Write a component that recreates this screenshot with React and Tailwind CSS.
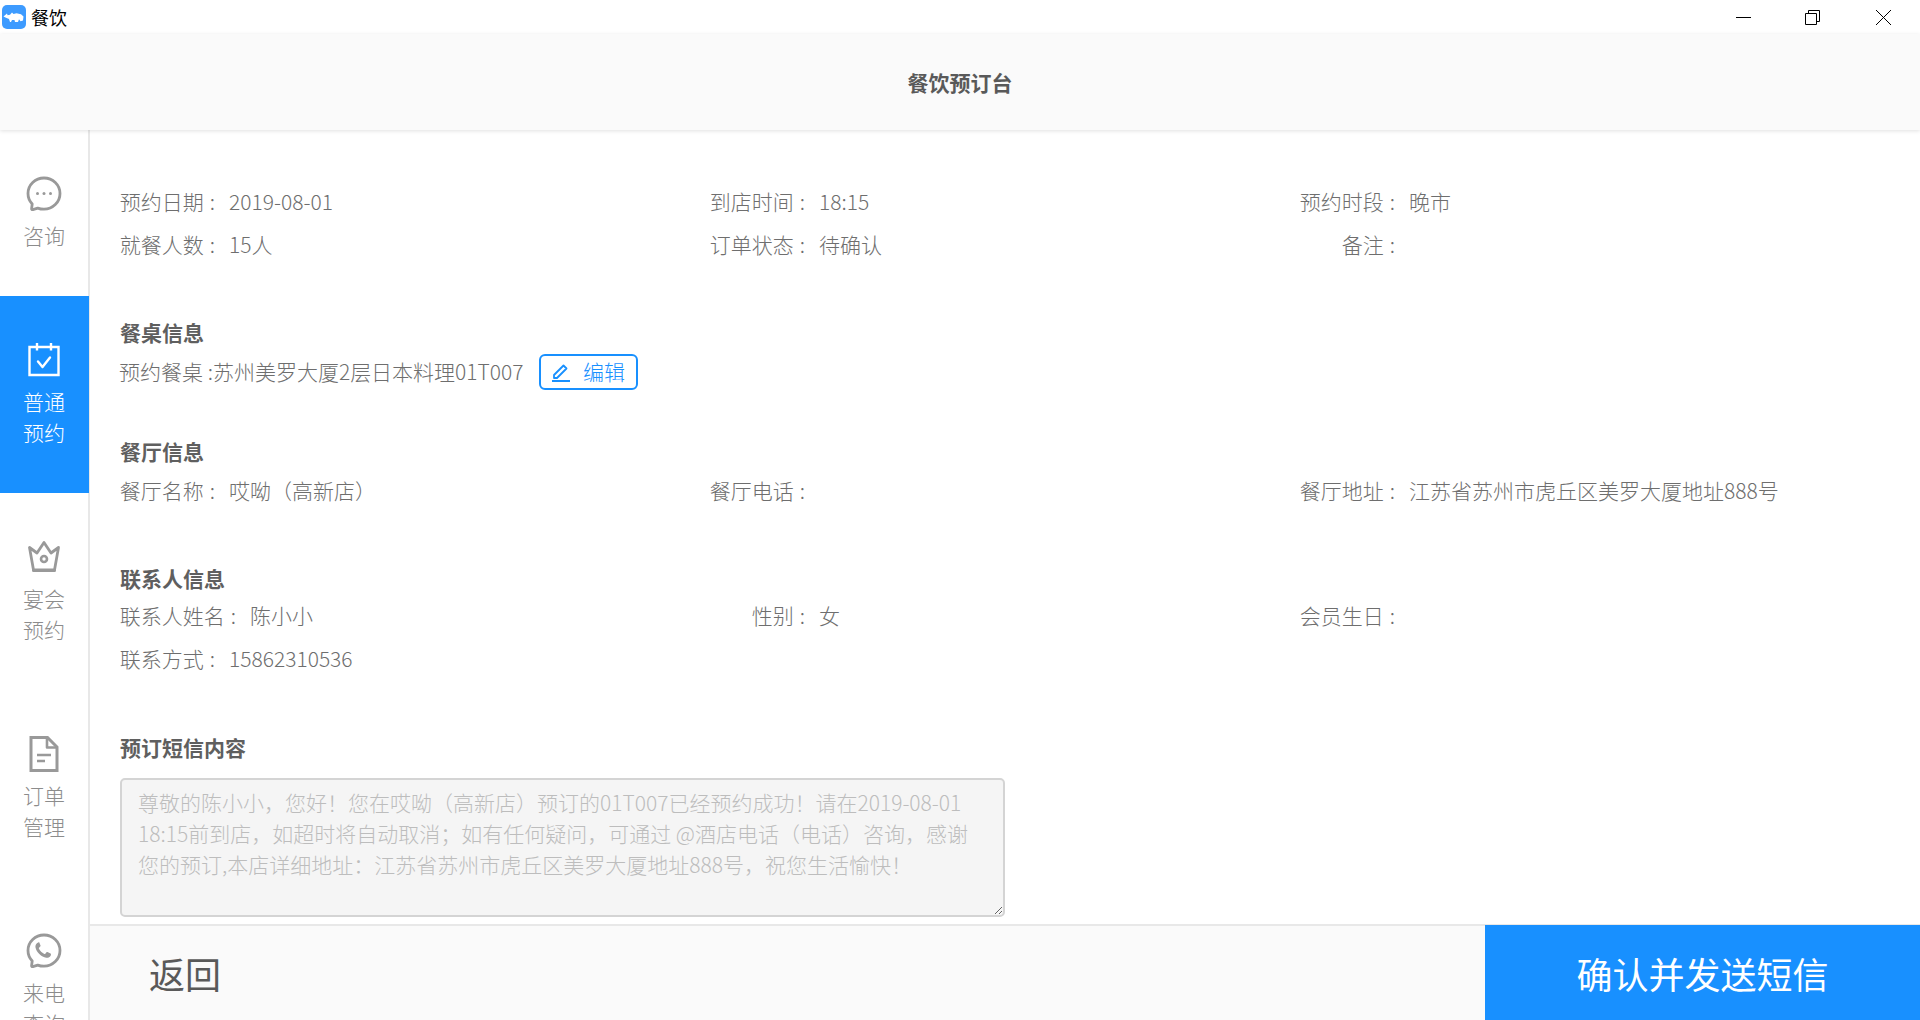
import React from "react";

function NavIcon({ name, color }) {
  const p = { fill: "none", stroke: color, strokeWidth: 2.4, strokeLinecap: "round", strokeLinejoin: "round" };
  if (name === "chat")
    return (
      <svg width="36" height="36" viewBox="0 0 36 36">
        <path {...p} strokeWidth="2.800" d="M18 2C9.200 2 2 8.900 2 17.500c0 4 1.600 7.700 4.200 10.500l-.6 4.600c-.1.800.6 1.300 1.300 1l4.800-1.500c1.900.7 4 1.100 6.300 1.100 8.800 0 16-7 16-15.700S26.800 2 18 2z" />
        <circle cx="11.500" cy="17.500" r="1.500" fill={color} />
        <circle cx="18" cy="17.500" r="1.500" fill={color} />
        <circle cx="24.500" cy="17.500" r="1.500" fill={color} />
      </svg>
    );
  if (name === "calendar")
    return (
      <svg width="36" height="36" viewBox="0 0 36 36">
        <path {...p} strokeLinecap="butt" strokeLinejoin="miter" strokeWidth="2.400" d="M3.500 5h29v28h-29z" />
        <path {...p} strokeLinecap="butt" strokeWidth="2.400" d="M11 1v7.500M25 1v7.500" />
        <path {...p} strokeWidth="2.400" d="M12 19.500l4.500 5.500 7.500-9.500" />
      </svg>
    );
  if (name === "crown")
    return (
      <svg width="36" height="36" viewBox="0 0 36 36">
        <path {...p} strokeWidth="2.800" d="M7.500 31h21L32.500 8.500 25 14 18 3.500 11 14 3.500 8.500z" />
        <path {...p} strokeWidth="3" d="M7.500 31.500h21" />
        <circle cx="18" cy="20" r="3" fill="none" stroke={color} strokeWidth="2.600" />
      </svg>
    );
  if (name === "doc")
    return (
      <svg width="36" height="36" viewBox="0 0 36 36">
        <path {...p} strokeLinecap="butt" strokeLinejoin="miter" strokeWidth="3" d="M5 1.500h16.500L31 11v23.500H5z" />
        <path {...p} strokeLinecap="butt" strokeWidth="2.600" d="M21 2v9.500h10M11 19h14M11 25h8" />
      </svg>
    );
  return (
    <svg width="36" height="36" viewBox="0 0 36 36">
      <path {...p} strokeWidth="2.800" d="M18 2C9.200 2 2 8.900 2 17.500c0 4 1.600 7.700 4.200 10.500l-.6 4.600c-.1.800.6 1.300 1.300 1l4.800-1.500c1.900.7 4 1.100 6.300 1.100 8.800 0 16-7 16-15.700S26.800 2 18 2z" />
      <path fill={color} d="M12.700 9.500c-.5 0-1.300.2-2 1-.9.900-1.500 2.200-1.200 4 .5 2.500 1.800 4.600 3.800 6.500 2.200 2.100 4.500 3.300 6.900 3.700 1.700.2 3-.4 3.900-1.300.6-.7.900-1.500.9-2 0-.4-.2-.6-.5-.8l-3-1.500c-.4-.2-.7-.1-1 .2l-1.200 1.500c-.3.300-.5.300-.9.200-1-.5-2.200-1.100-3.300-2.200-1.100-1-1.800-2.200-2.200-3.200-.1-.4 0-.6.200-.8l1.300-1.500c.2-.3.300-.6.100-.9l-1.300-3.100c-.2-.4-.4-.6-.5-.6z" />
    </svg>
  );
}

function NavItem({ name, lines, active, first }) {
  return (
    <div
      className={`shrink-0 flex flex-col items-center pt-[46px] ${first ? "h-[166px]" : "h-[197px]"} ${
        active ? "w-[89px] pr-[1px] bg-[#1890ff] text-white" : "w-[88px] text-[#8c8c8c]"
      }`}
    >
      <NavIcon name={name} color={active ? "#ffffff" : "#999999"} />
      <div className="mt-[8px] text-center text-[21px] leading-[31px] font-light">
        {lines.map((l) => (
          <div key={l}>{l}</div>
        ))}
      </div>
    </div>
  );
}

function Field({ label, value, w = "w-[96px]" }) {
  return (
    <div className="flex h-[43px] items-center whitespace-nowrap">
      <span className={`${w} shrink-0 text-right`}>
        {label}
        <span className="ml-[6px]">:</span>
      </span>
      <span className="ml-[14px]">{value}</span>
    </div>
  );
}

function Heading({ children, className = "" }) {
  return <div className={`h-[31px] text-[21px] leading-[31px] font-bold text-[#5f5f5f] ${className}`}>{children}</div>;
}

const grid = "grid grid-cols-[590px_590px_1fr]";

export default function App() {
  return (
    <div
      className="flex h-[1020px] w-[1920px] flex-col overflow-hidden bg-white text-[21px] font-light text-[#6e6e6e]"
      style={{ fontFamily: '"Noto Sans CJK SC", "Noto Sans", sans-serif' }}
    >
      {/* title bar */}
      <div className="flex h-[34px] shrink-0 items-center bg-white">
        <svg className="ml-[2px]" width="24" height="24" viewBox="0 0 24 24">
          <rect width="24" height="24" rx="5" fill="#3d9bff" />
          <path
            fill="#ffffff"
            d="M1.500 11.500L5 8.500l.6 1.800 2.400-.6L10 7.500l1.500 1.500 3-.8 4.500 1 2.500 2.300-.5 4-2.500.8-1.500-2-1 2.700h-3l-.5-2h-2.500l-1 2H8l-1-3-3-1.300z"
          />
        </svg>
        <span className="ml-[5px] text-[18px] leading-none font-normal text-black">餐饮</span>
        <div className="ml-auto flex items-center pr-[29px]">
          <svg width="15" height="15" viewBox="0 0 15 15">
            <path d="M0 7.500h15" stroke="#000" strokeWidth="1" />
          </svg>
          <svg className="ml-[54px]" width="15" height="15" viewBox="0 0 15 15">
            <path d="M.5 3.500h11v11H.5zM3.500 3.500v-3h11v11h-3" fill="none" stroke="#000" strokeWidth="1" />
          </svg>
          <svg className="ml-[56px]" width="15" height="15" viewBox="0 0 15 15">
            <path d="M0 0l15 15M15 0L0 15" stroke="#000" strokeWidth="1" />
          </svg>
        </div>
      </div>

      {/* header */}
      <div className="relative z-10 flex h-[96px] shrink-0 items-center justify-center bg-[#fafafa] pt-[2px] shadow-[0_1px_4px_rgba(0,0,0,0.12)]">
        <span className="text-[21px] font-bold text-[#595959]">餐饮预订台</span>
      </div>

      <div className="flex min-h-0 flex-1">
        {/* sidebar */}
        <div className="flex w-[90px] shrink-0 flex-col border-r-2 border-[#e8e8e8]">
          <NavItem first name="chat" lines={["咨询"]} />
          <NavItem active name="calendar" lines={["普通", "预约"]} />
          <NavItem name="crown" lines={["宴会", "预约"]} />
          <NavItem name="doc" lines={["订单", "管理"]} />
          <NavItem name="phone" lines={["来电", "查询"]} />
        </div>

        {/* main */}
        <div className="flex min-w-0 flex-1 flex-col">
          <div className="min-h-0 flex-1 overflow-hidden pt-[50px] pl-[29px]">
            <div className={grid}>
              <Field label="预约日期" value="2019-08-01" />
              <Field label="到店时间" value="18:15" />
              <Field label="预约时段" value="晚市" />
              <Field label="就餐人数" value="15人" />
              <Field label="订单状态" value="待确认" />
              <Field label="备注" value="" />
            </div>

            <Heading className="mt-[51px] ml-[1px]">餐桌信息</Heading>
            <div className="mt-[6px] flex h-[36px] items-center whitespace-nowrap">
              <span>预约餐桌 :苏州美罗大厦2层日本料理01T007</span>
              <button className="ml-[15px] flex h-[36px] w-[99px] items-center justify-center gap-[12px] rounded-[6px] border-2 border-[#1890ff] text-[#1890ff]">
                <svg width="20" height="20" viewBox="0 0 20 20">
                  <path d="M3 13L12.500 3.500l3 3L6 16H3zM1 19h18" fill="none" stroke="#1890ff" strokeWidth="1.800" strokeLinejoin="round" />
                </svg>
                <span>编辑</span>
              </button>
            </div>

            <Heading className="mt-[46px] ml-[1px]">餐厅信息</Heading>
            <div className={`${grid} mt-[2px]`}>
              <Field label="餐厅名称" value="哎呦（高新店）" />
              <Field label="餐厅电话" value="" />
              <Field label="餐厅地址" value="江苏省苏州市虎丘区美罗大厦地址888号" />
            </div>

            <Heading className="mt-[51px] ml-[1px]">联系人信息</Heading>
            <div className={grid}>
              <Field label="联系人姓名" value="陈小小" w="w-[117px]" />
              <Field label="性别" value="女" />
              <Field label="会员生日" value="" />
              <Field label="联系方式" value="15862310536" />
            </div>

            <Heading className="mt-[52px] ml-[1px]">预订短信内容</Heading>
            <textarea
              disabled
              className="mt-[15px] ml-[1px] block h-[139px] w-[885px] rounded-[5px] border-2 border-[#d4d4d4] bg-[#f5f5f5] px-[16px] py-[7px] text-[21px] leading-[31px] font-light text-[#bdbdbd]"
              defaultValue="尊敬的陈小小，您好！您在哎呦（高新店）预订的01T007已经预约成功！请在2019-08-01 18:15前到店，如超时将自动取消；如有任何疑问，可通过 @酒店电话（电话）咨询，感谢您的预订,本店详细地址：江苏省苏州市虎丘区美罗大厦地址888号，祝您生活愉快！"
            />
          </div>

          {/* footer */}
          <div className="flex h-[96px] shrink-0 items-stretch border-t-2 border-[#e8e8e8] bg-[#fafafa]">
            <div className="flex items-center pl-[59px] text-[36px] font-normal text-[#595959]">返回</div>
            <div className="-mt-[1px] ml-auto flex w-[435px] items-center justify-center bg-[#1890ff] text-[36px] font-normal text-white">
              确认并发送短信
            </div>
          </div>
        </div>
      </div>
    </div>
  );
}
